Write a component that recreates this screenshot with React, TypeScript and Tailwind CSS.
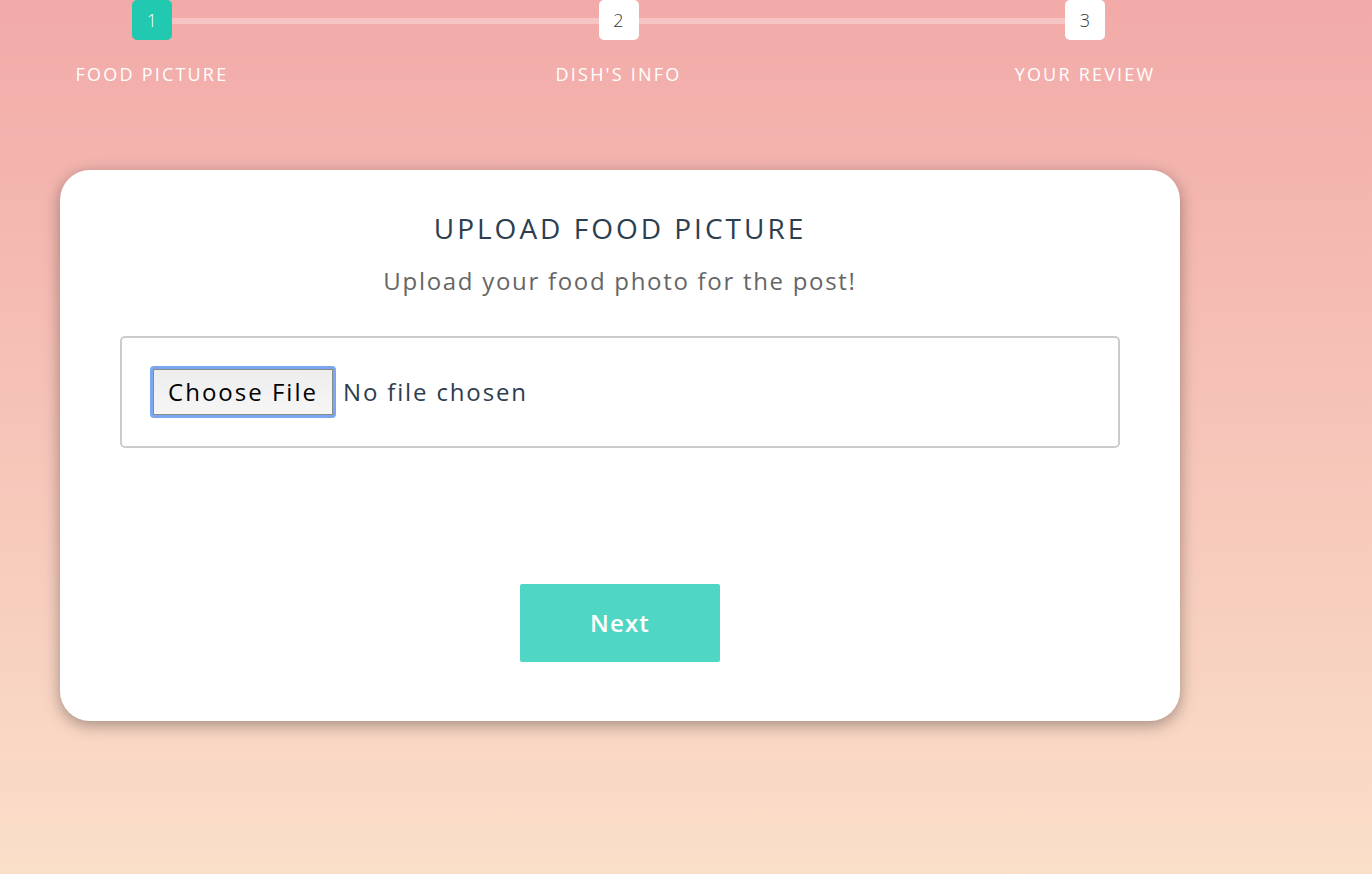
import React from "react";

const font = { fontFamily: '"Open Sans", "Liberation Sans", sans-serif' };

export default function App() {
  const steps = [
    { n: "1", label: "FOOD PICTURE", active: true },
    { n: "2", label: "DISH'S INFO", active: false },
    { n: "3", label: "YOUR REVIEW", active: false },
  ];
  return (
    <div
      className="min-h-[874px] w-full bg-[linear-gradient(to_bottom,#f2aaa8,#fadfc9)] overflow-hidden"
      style={font}
    >
      <div className="relative ml-[72px] w-[1093px]">
        <div className="absolute left-[80px] right-[80px] top-[18px] h-[6px] bg-[#f6c4c2]" />
        <div className="relative flex justify-between">
          {steps.map((s) => (
            <div key={s.n} className="flex w-[160px] flex-col items-center">
              <div
                className={
                  s.active
                    ? "flex h-[40px] w-[40px] items-center justify-center rounded-[5px] bg-[#20c9b0] text-[18px] font-light text-white"
                    : "flex h-[40px] w-[40px] items-center justify-center rounded-[5px] bg-white text-[18px] font-light text-[#333]"
                }
              >
                {s.n}
              </div>
              <div className="mt-[23px] whitespace-nowrap text-[18px] leading-[22px] font-normal tracking-[2.2px] text-white">
                {s.label}
              </div>
            </div>
          ))}
        </div>
      </div>

      <div className="ml-[60px] mt-[85px] flex h-[551px] w-[1120px] flex-col items-center rounded-[30px] bg-white shadow-[0_4px_16px_rgba(0,0,0,0.35)]">
        <div className="mt-[41px] text-[28px] leading-[34px] tracking-[3px] text-[#2c3e50]">
          UPLOAD FOOD PICTURE
        </div>
        <div className="mt-[21px] text-[24px] leading-[30px] tracking-[1.7px] text-[#666]">
          Upload your food photo for the post!
        </div>
        <div className="mt-[40px] flex h-[112px] w-[1000px] items-center rounded-[5px] border-2 border-[#ccc] pl-[28px]">
          <div className="flex h-[52px] w-[186px] items-center justify-center rounded-[4px] border-[3px] border-[#7aa7f0]">
            <div className="flex h-full w-full items-center justify-center border border-[#8a8a8a] bg-[linear-gradient(to_bottom,#ededed,#f6f6f6)] text-[24px] tracking-[2px] text-black">
              Choose File
            </div>
          </div>
          <div className="ml-[7px] text-[24px] tracking-[1.85px] text-[#2c3e50]">No file chosen</div>
        </div>
        <div className="mt-[136px] flex h-[78px] w-[200px] items-center justify-center rounded-[2px] bg-[#4fd6c5] text-[24px] font-semibold tracking-[1.2px] text-white">
          Next
        </div>
      </div>
    </div>
  );
}
